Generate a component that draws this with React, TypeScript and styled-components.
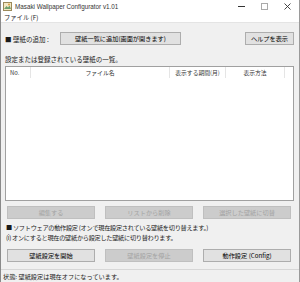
import React from 'react'
import styled, { createGlobalStyle } from 'styled-components'

const GlobalStyle = createGlobalStyle`
  html, body {
    margin: 0;
    padding: 0;
    background: #ffffff;
  }
  body {
    font-family: "Noto Sans CJK JP", "Liberation Sans", sans-serif;
    font-size: 6.5px;
    color: #1a1a1a;
  }
`

const Window = styled.div`
  width: 300px;
  height: 282px;
  box-sizing: border-box;
  border-left: 1px solid #8a8a8a;
  border-right: 1px solid #9a9a9a;
  display: flex;
  flex-direction: column;
  background: #f0f0f0;
  overflow: hidden;
`

const TitleBar = styled.div`
  height: 13px;
  background: #fff;
  display: flex;
  align-items: center;
  padding-left: 2px;
`

const Title = styled.span`
  margin-left: 3px;
  font-family: "Liberation Sans", sans-serif;
  font-size: 6.3px;
  color: #333;
  flex: 1;
`

const Controls = styled.div`
  display: flex;
  align-items: center;
  height: 100%;
`

const Ctrl = styled.div`
  width: 23px;
  height: 100%;
  display: flex;
  align-items: center;
  justify-content: center;
`

const MenuBar = styled.div`
  height: 9px;
  background: #fff;
  border-bottom: 1px solid #e4e4e4;
  display: flex;
  align-items: center;
  padding-left: 3px;
  font-size: 6.3px;
`

const Body = styled.div`
  flex: 1;
  display: flex;
  flex-direction: column;
  padding: 9px 5px 0 4px;
`

const TopRow = styled.div`
  display: flex;
  align-items: center;
  height: 13px;
`

const Label = styled.span`
  width: 55px;
  white-space: nowrap;
`

const Button = styled.div<{ $disabled?: boolean; $w?: number }>`
  box-sizing: border-box;
  height: 13px;
  width: ${(p) => (p.$w ? `${p.$w}px` : 'auto')};
  display: flex;
  align-items: center;
  justify-content: center;
  white-space: nowrap;
  font-size: 6.2px;
  background: ${(p) => (p.$disabled ? '#cccccc' : '#e1e1e1')};
  border: 1px solid ${(p) => (p.$disabled ? '#bfbfbf' : '#adadad')};
  color: ${(p) => (p.$disabled ? '#a3a3a3' : '#000')};
`

const Spacer = styled.div`
  flex: 1;
`

const Caption = styled.div`
  margin-top: 10px;
  height: 9px;
  line-height: 9px;
`

const List = styled.div`
  margin-top: 2px;
  width: 289px;
  height: 135px;
  box-sizing: border-box;
  background: #fff;
  border: 1px solid #a0a0a0;
`

const Header = styled.div`
  display: grid;
  grid-template-columns: 25px 139px 56px 59px 1fr;
  height: 11px;
  font-size: 5.8px;
  color: #333;
`

const HeadCell = styled.div<{ $left?: boolean }>`
  display: flex;
  align-items: center;
  justify-content: ${(p) => (p.$left ? 'flex-start' : 'center')};
  padding-left: ${(p) => (p.$left ? '4px' : '0')};
  border-right: 1px solid #e5e5e5;
  white-space: nowrap;
`

const ButtonRow = styled.div<{ $top?: number }>`
  display: flex;
  gap: 10px;
  margin-top: ${(p) => p.$top ?? 5}px;
  padding-left: 2px;
`

const Note = styled.div`
  height: 10px;
  line-height: 10px;
  white-space: nowrap;
  font-size: 6.2px;
  letter-spacing: -0.3px;
`

const Notes = styled.div`
  margin-top: 4px;
  margin-left: 1px;
`

const StatusBar = styled.div`
  height: 12px;
  border-top: 1px solid #d7d7d7;
  display: flex;
  align-items: center;
  padding-left: 2px;
  font-size: 6.2px;
`

const App: React.FC = () => {
  return (
    <>
      <GlobalStyle />
      <Window>
        <TitleBar>
          <svg width="9" height="9" viewBox="0 0 9 9">
            <rect x="0.5" y="0.5" width="8" height="8" fill="#f4e7c3" stroke="#9c8a5a" />
            <path d="M1 7 L3.5 4 L5 5.5 L6.5 3.5 L8 7 Z" fill="#6fa06a" />
            <circle cx="6" cy="2.5" r="1" fill="#e0a040" />
          </svg>
          <Title>Masaki Wallpaper Configurator v1.01</Title>
          <Controls>
            <Ctrl>
              <svg width="7" height="7"><line x1="0" y1="3.5" x2="7" y2="3.5" stroke="#333" strokeWidth="1" /></svg>
            </Ctrl>
            <Ctrl>
              <svg width="7" height="7"><rect x="0.5" y="0.5" width="6" height="6" fill="none" stroke="#aaa" /></svg>
            </Ctrl>
            <Ctrl>
              <svg width="7" height="7"><path d="M0.5 0.5 L6.5 6.5 M6.5 0.5 L0.5 6.5" stroke="#333" strokeWidth="0.9" /></svg>
            </Ctrl>
          </Controls>
        </TitleBar>
        <MenuBar>ファイル (F)</MenuBar>
        <Body>
          <TopRow>
            <Label>■ 壁紙の追加 :</Label>
            <Button $w={121}>壁紙一覧に追加(画面が開きます)</Button>
            <Spacer />
            <Button $w={49}>ヘルプを表示</Button>
          </TopRow>
          <Caption>設定または登録されている壁紙の一覧。</Caption>
          <List>
            <Header>
              <HeadCell $left>No.</HeadCell>
              <HeadCell>ファイル名</HeadCell>
              <HeadCell>表示する期間(月)</HeadCell>
              <HeadCell>表示方法</HeadCell>
              <div />
            </Header>
          </List>
          <ButtonRow>
            <Button $w={88} $disabled>編集する</Button>
            <Button $w={88} $disabled>リストから削除</Button>
            <Button $w={88} $disabled>選択した壁紙に切替</Button>
          </ButtonRow>
          <Notes>
            <Note>■ ソフトウェアの動作設定 (オンで現在設定されている壁紙を切り替えます。)</Note>
            <Note>(i) オンにすると現在の壁紙から設定した壁紙に切り替わります。</Note>
          </Notes>
          <ButtonRow $top={6}>
            <Button $w={88}>壁紙設定を開始</Button>
            <Button $w={88} $disabled>壁紙設定を停止</Button>
            <Button $w={88}>動作設定 (Config)</Button>
          </ButtonRow>
        </Body>
        <StatusBar>状態: 壁紙設定は現在オフになっています。</StatusBar>
      </Window>
    </>
  )
}

export default App
